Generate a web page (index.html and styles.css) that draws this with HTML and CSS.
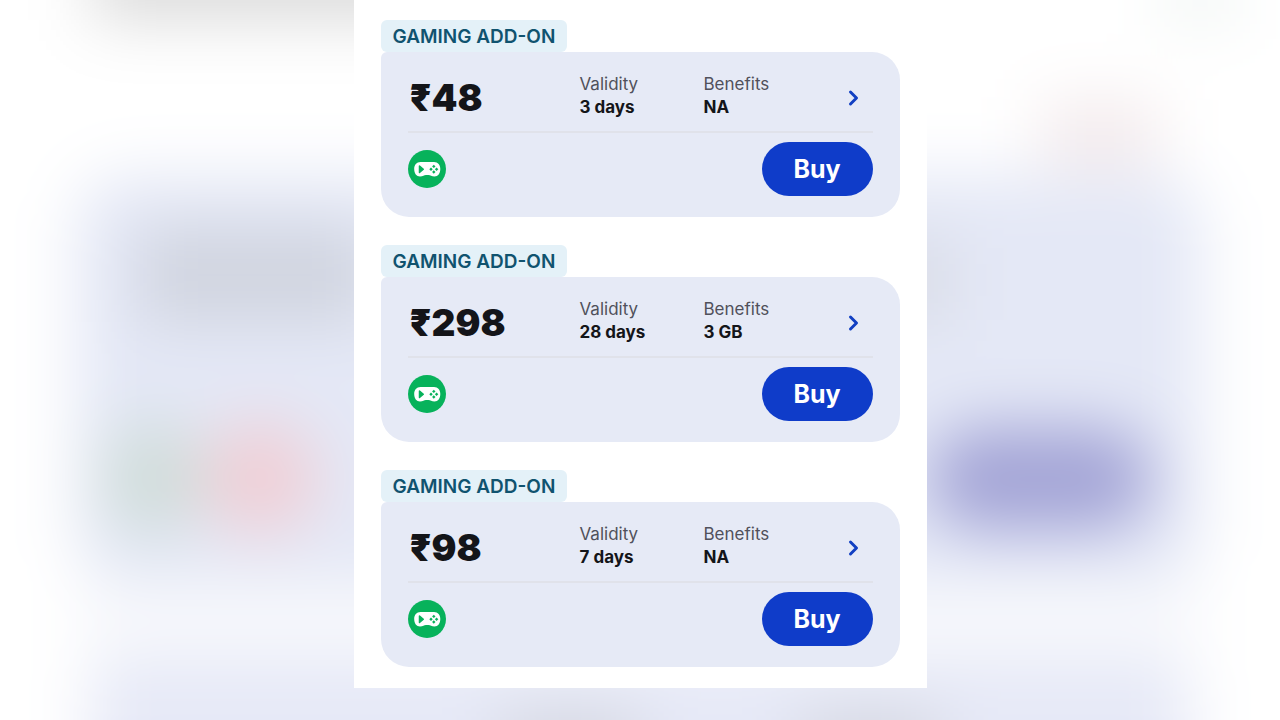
FILE: index.html
```
<!DOCTYPE html>
<html lang="en">
<head>
    <meta charset="UTF-8">
    <meta name="viewport" content="width=device-width, initial-scale=1.0">
    <title>Gaming add-on packs</title>
    <link rel="stylesheet" href="styles.css">
</head>
<body>
    <!-- blurred backdrop -->
    <svg class="backdrop" viewBox="0 0 1280 720" preserveAspectRatio="xMidYMid slice" aria-hidden="true">
        <defs>
            <filter id="blur" filterUnits="userSpaceOnUse" x="-200" y="-200" width="1680" height="1120" color-interpolation-filters="sRGB">
                <feGaussianBlur stdDeviation="32"/>
            </filter>
        </defs>
        <g filter="url(#blur)">
            <rect x="-200" y="-200" width="1680" height="1120" fill="#fff"/>
            <rect x="92" y="-60" width="400" height="80" fill="#dadada"/>
            <rect x="1160" y="-20" width="80" height="40" fill="#eef3f1"/>
            <rect x="76" y="175" width="1126" height="408" rx="50" fill="#e4e8f6"/>
            <rect x="140" y="228" width="230" height="94" fill="#d0d4df"/>
            <rect x="880" y="240" width="70" height="80" fill="#d8dbe5"/>
            <rect x="1040" y="100" width="120" height="66" fill="#f3eaec"/>
            <rect x="102" y="422" width="100" height="112" rx="50" fill="#d0ddda"/>
            <rect x="202" y="422" width="116" height="112" rx="56" fill="#f0cfd6"/>
            <rect x="928" y="428" width="224" height="102" rx="51" fill="#a3a4d6"/>
            <rect x="76" y="583" width="1126" height="80" fill="#f8f9fc"/>
            <rect x="90" y="658" width="1100" height="160" rx="30" fill="#e6e9f7"/>
            <rect x="500" y="716" width="140" height="60" fill="#d3d5de"/>
            <rect x="800" y="716" width="140" height="60" fill="#d3d5de"/>
        </g>
    </svg>

    <!-- gamepad icon used in every card -->
    <svg class="symbols" aria-hidden="true">
        <symbol id="gamepad" viewBox="0 0 38 38">
            <circle cx="19" cy="19" r="19" fill="#07b25b"/>
            <path d="M12.500 12H26C30 12 32.300 15 32.300 19C32.300 23.500 30 26.500 26.500 26.500C23.500 26.500 22.500 25 20.500 25H18C16 25 15 26.500 12 26.500C8.500 26.500 6.200 23.500 6.200 19C6.200 15 8.500 12 12.500 12Z" fill="#fff"/>
            <path d="M11.500 16L15.300 19.200L11.500 22.400Z" fill="#07b25b" stroke="#07b25b" stroke-width="1.500" stroke-linejoin="round"/>
            <g fill="#07b25b">
                <path d="M25.800 14.700L27.500 16.400L25.800 18.100L24.100 16.400Z"/>
                <path d="M25.800 20.300L27.500 22L25.800 23.700L24.100 22Z"/>
                <path d="M23 17.500L24.700 19.200L23 20.900L21.300 19.200Z"/>
                <path d="M28.600 17.500L30.300 19.200L28.600 20.900L26.900 19.200Z"/>
            </g>
        </symbol>
    </svg>

    <main class="panel">
        <section class="pack">
            <div class="tag">GAMING ADD-ON</div>
            <div class="card">
                <div class="info">
                    <div class="price">₹48</div>
                    <dl class="detail">
                        <dt>Validity</dt>
                        <dd>3 days</dd>
                    </dl>
                    <dl class="detail">
                        <dt>Benefits</dt>
                        <dd>NA</dd>
                    </dl>
                    <a class="more" href="#" aria-label="View details">
                        <svg width="12" height="18" viewBox="0 0 12 18"><path d="M2.500 3L8.500 9L2.500 15"/></svg>
                    </a>
                </div>
                <div class="action">
                    <svg class="game" role="img" aria-label="Gaming"><use href="#gamepad"/></svg>
                    <button type="button" class="buy">Buy</button>
                </div>
            </div>
        </section>

        <section class="pack">
            <div class="tag">GAMING ADD-ON</div>
            <div class="card">
                <div class="info">
                    <div class="price">₹298</div>
                    <dl class="detail">
                        <dt>Validity</dt>
                        <dd>28 days</dd>
                    </dl>
                    <dl class="detail">
                        <dt>Benefits</dt>
                        <dd>3 GB</dd>
                    </dl>
                    <a class="more" href="#" aria-label="View details">
                        <svg width="12" height="18" viewBox="0 0 12 18"><path d="M2.500 3L8.500 9L2.500 15"/></svg>
                    </a>
                </div>
                <div class="action">
                    <svg class="game" role="img" aria-label="Gaming"><use href="#gamepad"/></svg>
                    <button type="button" class="buy">Buy</button>
                </div>
            </div>
        </section>

        <section class="pack">
            <div class="tag">GAMING ADD-ON</div>
            <div class="card">
                <div class="info">
                    <div class="price">₹98</div>
                    <dl class="detail">
                        <dt>Validity</dt>
                        <dd>7 days</dd>
                    </dl>
                    <dl class="detail">
                        <dt>Benefits</dt>
                        <dd>NA</dd>
                    </dl>
                    <a class="more" href="#" aria-label="View details">
                        <svg width="12" height="18" viewBox="0 0 12 18"><path d="M2.500 3L8.500 9L2.500 15"/></svg>
                    </a>
                </div>
                <div class="action">
                    <svg class="game" role="img" aria-label="Gaming"><use href="#gamepad"/></svg>
                    <button type="button" class="buy">Buy</button>
                </div>
            </div>
        </section>
    </main>
</body>
</html>
```
FILE: styles.css
```
* {
    box-sizing: border-box;
}

body {
    margin: 0;
    background-color: white;
    font-family: Inter, "Liberation Sans", sans-serif;
    color: #141519;
}

.backdrop {
    position: fixed;
    inset: 0;
    z-index: -1;
    width: 100%;
    height: 100%;
}

.symbols {
    display: none;
}

.panel {
    display: flex;
    flex-direction: column;
    gap: 28px;
    max-width: 573px;
    margin: 0 auto;
    padding: 20px 27px 21px;
    background-color: white;
}

.tag {
    width: fit-content;
    padding: 1px 12px 0;
    border-radius: 6px;
    background-color: #e4f1f8;
    color: #10536f;
    font-size: 19px;
    font-weight: 600;
    line-height: 31px;
}

.card {
    padding: 0 27px 21px;
    border-radius: 6px 28px 28px 28px;
    background-color: #e6eaf6;
}

.info {
    display: grid;
    grid-template-columns: 172fr 124fr 144fr 25px;
    align-items: center;
    padding: 21px 0 8px;
    border-bottom: 2px solid #e0e2ea;
}

.price {
    padding-left: 2px;
    font-size: 37px;
    font-weight: 900;
    line-height: 50px;
}

.detail {
    align-self: start;
    margin: 0;
    font-size: 17px;
    line-height: 23px;
}

.detail dt {
    color: #50515b;
}

.detail dd {
    margin: 0;
    font-weight: 700;
}

.more svg {
    display: block;
}

.more path {
    fill: none;
    stroke: #1240c2;
    stroke-width: 3;
    stroke-linecap: round;
    stroke-linejoin: round;
}

.action {
    display: flex;
    justify-content: space-between;
    align-items: center;
    padding-top: 9px;
}

.game {
    width: 38px;
    height: 38px;
}

.buy {
    width: 111px;
    height: 54px;
    border: none;
    border-radius: 27px;
    background-color: #0f3cc9;
    color: white;
    font-family: inherit;
    font-size: 25px;
    font-weight: 700;
}
```
